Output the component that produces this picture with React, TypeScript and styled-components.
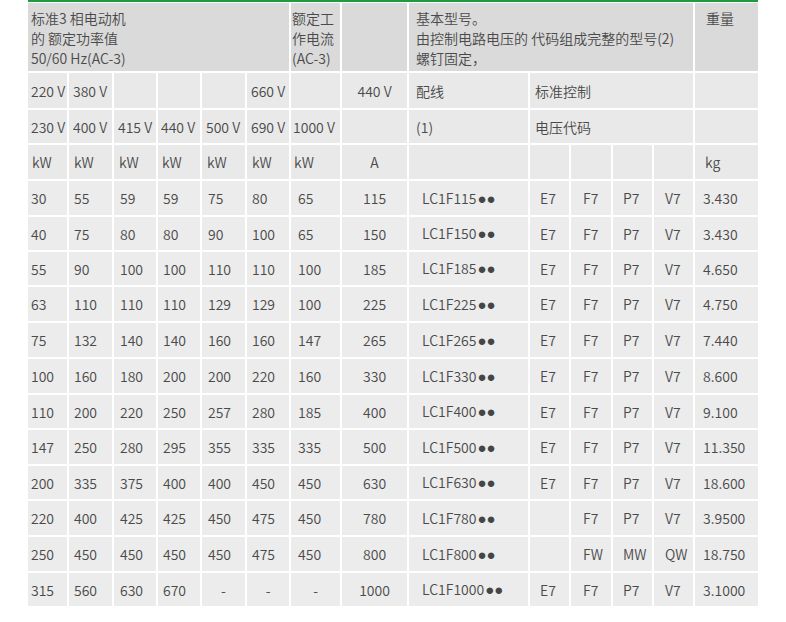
import styled, { createGlobalStyle } from "styled-components"

const GlobalStyle = createGlobalStyle`
    body {
        margin: 0;
        background: #ffffff;
        font-family: "Noto Sans CJK SC", "Noto Sans", sans-serif;
        font-weight: 350;
        color: #4a4a4a;
    }
`

const Frame = styled.div`
    margin-left: 28px;
    width: 730px;
    border-top: 2px solid #1f9a3f;
    padding-top: 1px;
`

const Sheet = styled.table`
    border-collapse: separate;
    border-spacing: 2px;
    table-layout: fixed;
    width: 734px;
    margin: -2px -2px 0;
    font-size: 14px;
    line-height: 20px;
`

const Row = styled.tr<{ $h: number }>`
    height: ${p => p.$h}px;
`

type Tone = "head" | "sub" | "body"
const tones: Record<Tone, string> = {
    head: "#dadada",
    sub: "#e9e9e9",
    body: "#ececec",
}

const Cell = styled.td<{ $tone: Tone; $pad?: number; $center?: boolean; $top?: boolean }>`
    background: ${p => tones[p.$tone]};
    padding: ${p => (p.$top ? "5px" : "0")} 0 0 ${p => (p.$center ? 0 : p.$pad ?? 0)}px;
    text-align: ${p => (p.$center ? "center" : "left")};
    vertical-align: ${p => (p.$top ? "top" : "middle")};
    white-space: nowrap;
    overflow: hidden;
`

const Dots = styled.span`
    font-family: "Liberation Sans", sans-serif;
    font-size: 15px;
    font-weight: 400;
    color: #454545;
    margin-left: 1px;
`

const widths = [39, 43, 42, 42, 43, 42, 49, 65, 119, 39, 40, 39, 39, 63]
const bodyPad = [3, 5, 6, 5, 6, 5, 7, 0, 13, 10, 12, 10, 11, 8]
const subPad = [3, 4, 4, 3, 4, 4, 2]

const rows: { h: number; v: string[] }[] = [
    { h: 34, v: ["30", "55", "59", "59", "75", "80", "65", "115", "LC1F115", "E7", "F7", "P7", "V7", "3.430"] },
    { h: 33, v: ["40", "75", "80", "80", "90", "100", "65", "150", "LC1F150", "E7", "F7", "P7", "V7", "3.430"] },
    { h: 33, v: ["55", "90", "100", "100", "110", "110", "100", "185", "LC1F185", "E7", "F7", "P7", "V7", "4.650"] },
    { h: 34, v: ["63", "110", "110", "110", "129", "129", "100", "225", "LC1F225", "E7", "F7", "P7", "V7", "4.750"] },
    { h: 34, v: ["75", "132", "140", "140", "160", "160", "147", "265", "LC1F265", "E7", "F7", "P7", "V7", "7.440"] },
    { h: 34, v: ["100", "160", "180", "200", "200", "220", "160", "330", "LC1F330", "E7", "F7", "P7", "V7", "8.600"] },
    { h: 33, v: ["110", "200", "220", "250", "257", "280", "185", "400", "LC1F400", "E7", "F7", "P7", "V7", "9.100"] },
    { h: 34, v: ["147", "250", "280", "295", "355", "335", "335", "500", "LC1F500", "E7", "F7", "P7", "V7", "11.350"] },
    { h: 33, v: ["200", "335", "375", "400", "400", "450", "450", "630", "LC1F630", "E7", "F7", "P7", "V7", "18.600"] },
    { h: 34, v: ["220", "400", "425", "425", "450", "475", "450", "780", "LC1F780", "", "F7", "P7", "V7", "3.9500"] },
    { h: 34, v: ["250", "450", "450", "450", "450", "475", "450", "800", "LC1F800", "", "FW", "MW", "QW", "18.750"] },
    { h: 33, v: ["315", "560", "630", "670", "-", "-", "-", "1000", "LC1F1000", "E7", "F7", "P7", "V7", "3.1000"] },
]

const volts1 = ["220 V", "380 V", "", "", "", "660 V", ""]
const volts2 = ["230 V", "400 V", "415 V", "440 V", "500 V", "690 V", "1000 V"]

export default function App() {
    return <>
        <GlobalStyle />
        <Frame>
            <Sheet>
                <colgroup>
                    {widths.map((w, i) => <col key={i} style={{ width: w }} />)}
                </colgroup>
                <tbody>
                    <Row $h={68}>
                        <Cell $tone="head" $top $pad={3} colSpan={6}>
                            标准3 相电动机<br />的 额定功率值<br />50/60 Hz(AC-3)
                        </Cell>
                        <Cell $tone="head" $top $pad={1}>额定工<br />作电流<br />(AC-3)</Cell>
                        <Cell $tone="head" />
                        <Cell $tone="head" $top $pad={7} colSpan={5}>
                            基本型号。<br />由控制电路电压的 代码组成完整的型号(2)<br />螺钉固定，
                        </Cell>
                        <Cell $tone="head" $top $pad={11}>重量</Cell>
                    </Row>
                    <Row $h={35}>
                        {volts1.map((t, i) => <Cell key={i} $tone="sub" $pad={subPad[i]}>{t}</Cell>)}
                        <Cell $tone="sub" $center>440 V</Cell>
                        <Cell $tone="sub" $pad={7}>配线</Cell>
                        <Cell $tone="sub" $pad={5} colSpan={4}>标准控制</Cell>
                        <Cell $tone="sub" />
                    </Row>
                    <Row $h={33}>
                        {volts2.map((t, i) => <Cell key={i} $tone="sub" $pad={subPad[i]}>{t}</Cell>)}
                        <Cell $tone="sub" />
                        <Cell $tone="sub" $pad={7}>(1)</Cell>
                        <Cell $tone="sub" $pad={5} colSpan={4}>电压代码</Cell>
                        <Cell $tone="sub" />
                    </Row>
                    <Row $h={34}>
                        {subPad.map((p, i) => <Cell key={i} $tone="sub" $pad={p + 1}>kW</Cell>)}
                        <Cell $tone="sub" $center>A</Cell>
                        <Cell $tone="sub" />
                        <Cell $tone="sub" />
                        <Cell $tone="sub" />
                        <Cell $tone="sub" />
                        <Cell $tone="sub" />
                        <Cell $tone="sub" $pad={10}>kg</Cell>
                    </Row>
                    {rows.map((r, ri) => (
                        <Row key={ri} $h={r.h}>
                            {r.v.map((t, i) => (
                                <Cell key={i} $tone="body" $pad={bodyPad[i]} $center={i === 7 || t === "-"}>
                                    {i === 8 ? <>{t}<Dots>●●</Dots></> : t}
                                </Cell>
                            ))}
                        </Row>
                    ))}
                </tbody>
            </Sheet>
        </Frame>
    </>
}
